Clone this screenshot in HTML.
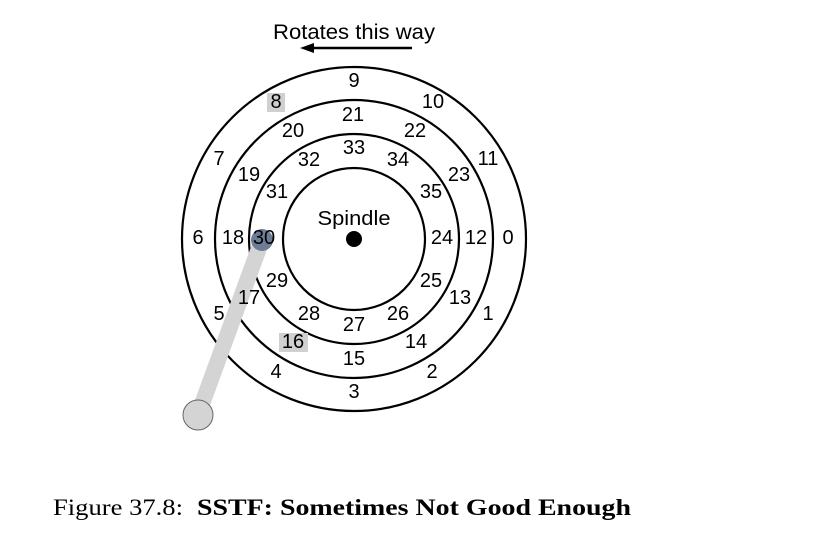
<!DOCTYPE html>
<html><head><style>
body{margin:0;background:#fff;}
svg{display:block}
</style></head><body>
<svg width="826" height="554" viewBox="0 0 826 554" xmlns="http://www.w3.org/2000/svg">
<rect width="826" height="554" fill="#fff"/>
<text x="354" y="39" font-family="Liberation Sans, sans-serif" font-size="21" text-anchor="middle" textLength="162" lengthAdjust="spacingAndGlyphs">Rotates this way</text>
<line x1="412" y1="48" x2="312" y2="48" stroke="#000" stroke-width="2.5"/>
<polygon points="300,48 314,43 314,53" fill="#000"/>
<g fill="none" stroke="#000" stroke-width="2.2">
<circle cx="354" cy="239" r="172"/>
<circle cx="354" cy="239" r="139"/>
<circle cx="354" cy="239" r="105"/>
<circle cx="354" cy="239" r="71"/>
</g>
<circle cx="354" cy="239" r="8" fill="#000"/>
<rect x="267" y="93" width="18" height="19" fill="#d0d0d0"/>
<rect x="279" y="333" width="29" height="19" fill="#d0d0d0"/>
<line x1="198" y1="415" x2="262" y2="240" stroke="#d4d4d4" stroke-width="16"/>
<circle cx="198" cy="415" r="15" fill="#d4d4d4" stroke="#666" stroke-width="1"/>
<circle cx="262" cy="240" r="11" fill="#6d7d96"/>
<g font-family="Liberation Sans, sans-serif" font-size="20" text-anchor="middle" dominant-baseline="central" fill="#000">
<text x="354" y="81">9</text>
<text x="276" y="102">8</text>
<text x="433" y="102">10</text>
<text x="353" y="115">21</text>
<text x="293" y="131">20</text>
<text x="415" y="131">22</text>
<text x="354" y="148">33</text>
<text x="309" y="160">32</text>
<text x="398" y="160">34</text>
<text x="219" y="159">7</text>
<text x="488" y="159">11</text>
<text x="249" y="175">19</text>
<text x="459" y="175">23</text>
<text x="277" y="192">31</text>
<text x="431" y="192">35</text>
<text x="354" y="219" textLength="73" lengthAdjust="spacingAndGlyphs">Spindle</text>
<text x="198" y="238">6</text>
<text x="233" y="238">18</text>
<text x="264" y="238">30</text>
<text x="442" y="238">24</text>
<text x="476" y="238">12</text>
<text x="508" y="238">0</text>
<text x="277" y="281">29</text>
<text x="431" y="281">25</text>
<text x="249" y="298">17</text>
<text x="460" y="298">13</text>
<text x="219" y="314">5</text>
<text x="488" y="314">1</text>
<text x="309" y="314">28</text>
<text x="398" y="314">26</text>
<text x="354" y="325">27</text>
<text x="293" y="342">16</text>
<text x="416" y="342">14</text>
<text x="354" y="359">15</text>
<text x="276" y="372">4</text>
<text x="432" y="372">2</text>
<text x="354" y="392">3</text>
</g>
<text x="53" y="515" font-family="Liberation Serif, serif" font-size="23" fill="#000" textLength="130" lengthAdjust="spacingAndGlyphs">Figure 37.8:</text>
<text x="197" y="515" font-family="Liberation Serif, serif" font-size="23" font-weight="bold" fill="#000" textLength="434" lengthAdjust="spacingAndGlyphs">SSTF: Sometimes Not Good Enough</text>
</svg>
</body></html>
